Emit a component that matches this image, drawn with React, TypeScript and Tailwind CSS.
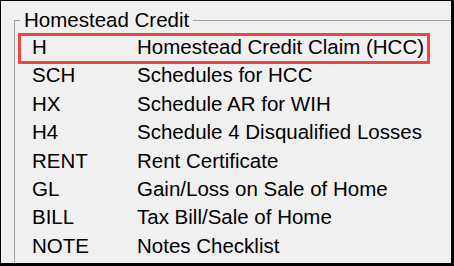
import React from "react";

const rows: [string, string][] = [
  ["H", "Homestead Credit Claim (HCC)"],
  ["SCH", "Schedules for HCC"],
  ["HX", "Schedule AR for WIH"],
  ["H4", "Schedule 4 Disqualified Losses"],
  ["RENT", "Rent Certificate"],
  ["GL", "Gain/Loss on Sale of Home"],
  ["BILL", "Tax Bill/Sale of Home"],
  ["NOTE", "Notes Checklist"],
];

export default function App() {
  return (
    <div
      className="w-[454px] h-[266px] overflow-hidden bg-[#f0f0f0] border-l border-t border-r-[3px] border-b-[3px] border-black text-black text-[20.5px]"
      style={{ fontFamily: '"Liberation Sans", Arial, sans-serif' }}
    >
      <fieldset className="ml-[13px] mt-[7px] h-[300px] border-t border-l border-[#a0a0a0] p-0 min-w-0">
        <legend className="ml-[5px] px-[4px] leading-[24px]">Homestead Credit</legend>
        <div className="relative pt-[1px]">
          <div className="absolute left-[3px] top-[0.5px] w-[412px] h-[31px] border-[3px] border-[#ea4648]" />
          {rows.map(([code, desc]) => (
            <div key={code} className="flex h-[28.4px] leading-[28.4px] pl-[17px] whitespace-nowrap">
              <div className="w-[105px]">{code}</div>
              <div>{desc}</div>
            </div>
          ))}
        </div>
      </fieldset>
    </div>
  );
}
